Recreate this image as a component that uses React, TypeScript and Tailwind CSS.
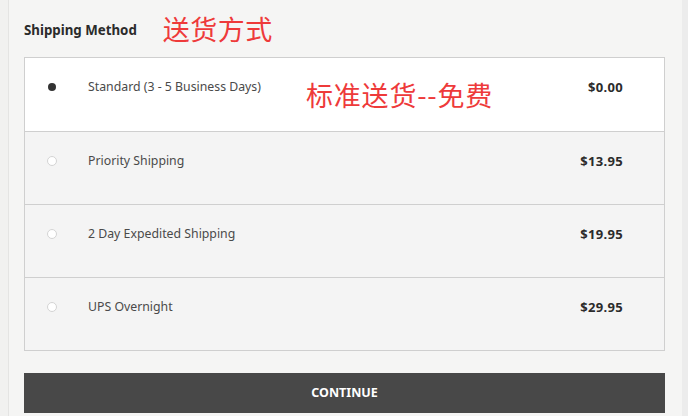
import React from 'react';

const options = [
  { label: 'Standard (3 - 5 Business Days)', price: '$0.00', selected: true },
  { label: 'Priority Shipping', price: '$13.95', selected: false },
  { label: '2 Day Expedited Shipping', price: '$19.95', selected: false },
  { label: 'UPS Overnight', price: '$29.95', selected: false },
];

const cjk = { fontFamily: '"Noto Sans CJK SC", "Noto Sans", sans-serif' };

export default function App() {
  return (
    <div className="flex h-[416px] w-[688px] overflow-hidden bg-[#f5f5f4]" style={{ fontFamily: '"Noto Sans", Lato, sans-serif' }}>
      <div className="w-[9px] shrink-0 border-r border-[#e4e4e3] bg-[#f1f1f0]" />
      <div className="w-[641px] shrink-0 pl-[15px] box-content">
        <div className="flex h-[57px] items-center pt-[4px]">
          <h2 className="text-[13.3px] font-bold text-[#2b2b2b]">Shipping Method</h2>
          <span className="ml-[26px] -mt-[4px] text-[27px] leading-none tracking-[0.5px] text-[#ee3a3a]" style={cjk}>送货方式</span>
        </div>
        <div className="relative border border-[#cfcfcf]">
          {options.map((o, i) => (
            <div
              key={o.label}
              className={`flex h-[73px] items-start pl-[22px] pr-[41px] ${i > 0 ? 'border-t border-[#cfcfcf] pt-[21px]' : 'pt-[21px]'} ${o.selected ? 'bg-white' : 'bg-[#f4f4f4]'}`}
            >
              <div className="flex h-[16px] w-[10px] items-center justify-center">
                {o.selected ? (
                  <span className="h-[8px] w-[8px] rounded-full bg-[#333]" />
                ) : (
                  <span className="h-[10px] w-[10px] rounded-full border border-[#d4d4d4] bg-white" />
                )}
              </div>
              <span className="ml-[31px] text-[12.3px] leading-[16px] text-[#4a4a4a]">{o.label}</span>
              <span className="ml-auto text-[13px] font-bold leading-[16px] tracking-[0.3px] text-[#2b2b2b]">{o.price}</span>
            </div>
          ))}
          <span className="absolute left-[281px] top-[23px] text-[27px] leading-none tracking-[0.8px] text-[#ee3a3a]" style={cjk}>标准送货--免费</span>
        </div>
        <button className="mt-[22px] flex h-[40px] w-full items-center justify-center bg-[#484848] text-[12.5px] font-bold text-white">
          CONTINUE
        </button>
      </div>
      <div className="ml-auto w-[6px] shrink-0 bg-[#ececec]" />
    </div>
  );
}
